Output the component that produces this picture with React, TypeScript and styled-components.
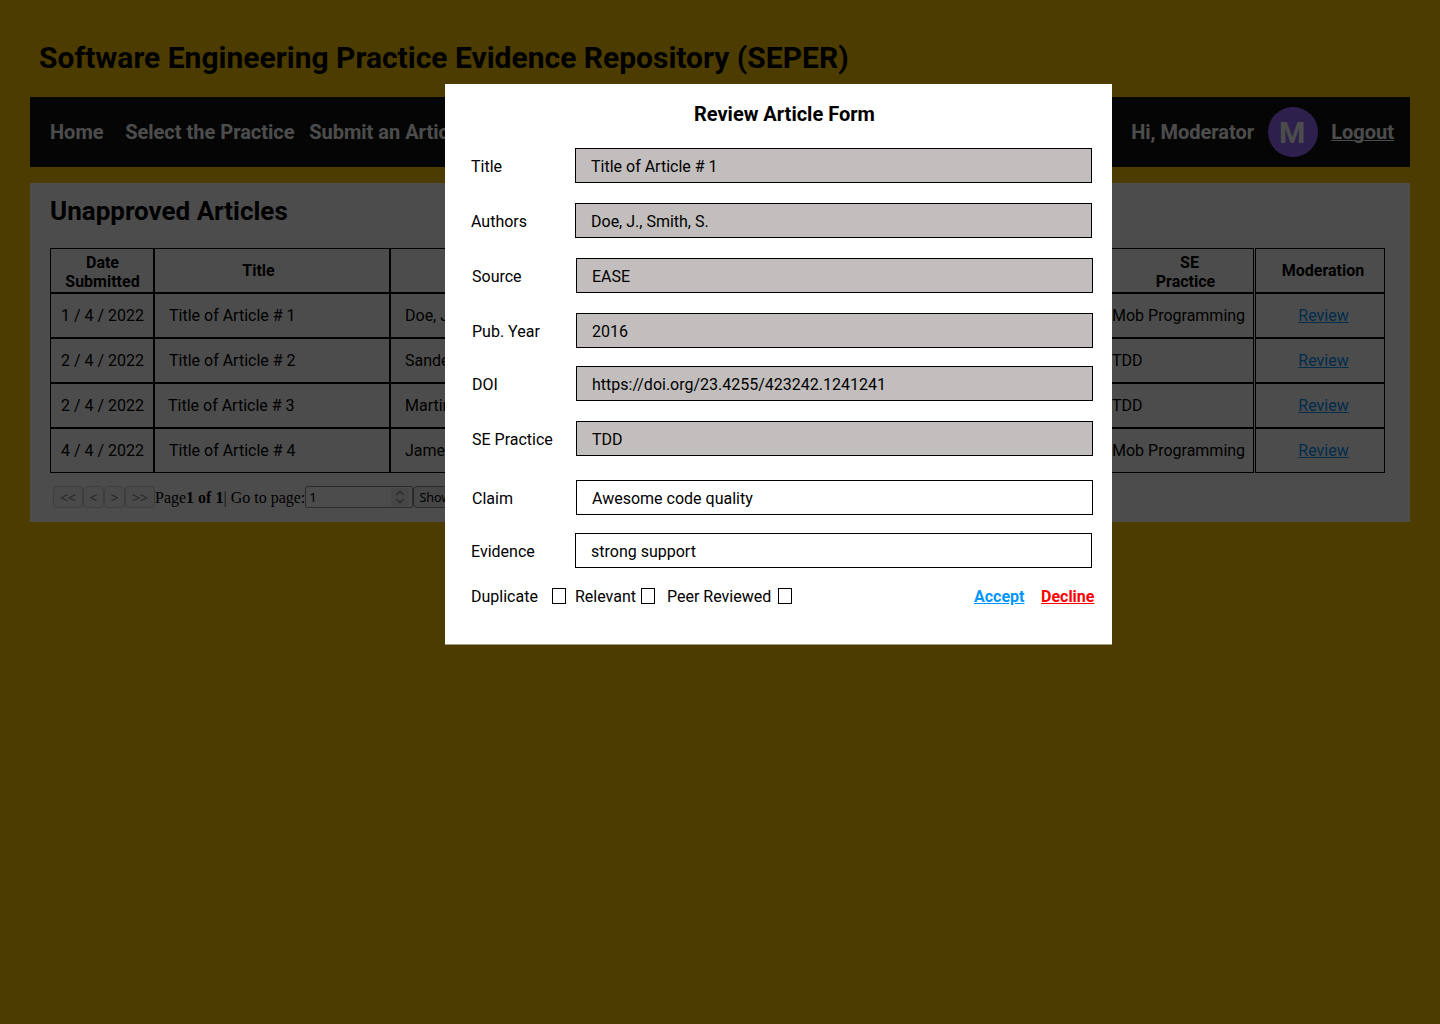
import React from "react";
import styled, { createGlobalStyle } from "styled-components";

const GlobalStyle = createGlobalStyle`
  *, *::before, *::after { box-sizing: border-box; }
  html, body { margin: 0; padding: 0; background: #ffc900; }
  body { font-family: Roboto, "Liberation Sans", sans-serif; font-size: 16px; line-height: 19px; color: #000; overflow: hidden; }
  button, input { font: inherit; color: inherit; }
`;

const Page = styled.div`
  width: 1440px;
  height: 1024px;
  padding: 0 30px;
  background: #ffc900;
  overflow: hidden;
`;

const SiteTitle = styled.h1`
  margin: 0;
  height: 97px;
  padding: 40px 0 0 9px;
  font-size: 30px;
  line-height: 35px;
  font-weight: 700;
`;

const NavBar = styled.nav`
  display: flex;
  align-items: center;
  height: 70px;
  padding: 0 16px 0 20px;
  background: #111;
  color: #fff;
  font-size: 20px;
  line-height: 23px;
  font-weight: 700;
`;

const NavLink = styled.a<{ $gap: number }>`
  margin-right: ${(p) => p.$gap}px;
  white-space: nowrap;
`;

const Greeting = styled.span`
  margin-left: auto;
`;

const Avatar = styled.span`
  display: flex;
  align-items: center;
  justify-content: center;
  width: 50px;
  height: 50px;
  margin: 0 13px 0 14px;
  padding-right: 2px;
  border-radius: 50%;
  background: #9b6bff;
  font-size: 30px;
  line-height: 35px;
`;

const Logout = styled.a`
  text-decoration: underline;
  text-decoration-thickness: 1px;
`;

const Panel = styled.section`
  height: 339px;
  margin-top: 16px;
  padding: 13px 25px 0 20px;
  background: #fff;
`;

const PanelTitle = styled.h2`
  margin: 0 0 22px;
  font-size: 26px;
  line-height: 30px;
  font-weight: 700;
`;

const Table = styled.div`
  display: flex;
  flex-direction: column;
`;

const Row = styled.div<{ $head?: boolean }>`
  display: grid;
  grid-template-columns: 104px 236px 721px 144px 130px;
  height: 45px;
  font-weight: ${(p) => (p.$head ? 700 : 400)};
`;

const Cell = styled.div<{ $align?: string; $pad?: string; $gap?: number }>`
  display: flex;
  align-items: center;
  justify-content: ${(p) => p.$align || "flex-start"};
  padding: ${(p) => p.$pad || "0"};
  margin-right: ${(p) => p.$gap || 0}px;
  border: 1px solid #000;
  text-align: center;
  white-space: pre;
`;

const ReviewLink = styled.a`
  color: #0096ff;
  text-decoration: underline;
`;

const Pager = styled.div`
  display: flex;
  align-items: center;
  height: 22px;
  margin: 13px 0 0 3px;
  font-family: "Liberation Serif", serif;
  white-space: pre;
`;

const PagerButton = styled.button<{ $w: number; $active?: boolean }>`
  width: ${(p) => p.$w}px;
  height: 22px;
  padding: 2px 0 0;
  border: 1px solid ${(p) => (p.$active ? "#8f8f9d" : "#cfcfd3")};
  border-radius: 4px;
  background: ${(p) => (p.$active ? "#e9e9ed" : "#f8f8f8")};
  color: ${(p) => (p.$active ? "#000" : "#858585")};
  font-family: "Noto Sans", "Open Sans", sans-serif;
  font-size: ${(p) => (p.$active ? 12.5 : 14)}px;
  line-height: 18px;
`;

const Divider = styled.span`
  color: #444;
`;

const PageInput = styled.div`
  display: flex;
  align-items: center;
  justify-content: space-between;
  width: 108px;
  height: 22px;
  padding: 0 3px;
  border: 1px solid #8f8f9d;
  border-radius: 2px;
  font-family: "Noto Sans", "Open Sans", sans-serif;
  font-size: 13px;
`;

const Spinner = styled.span`
  display: flex;
  align-items: center;
  justify-content: center;
  width: 18px;
  height: 18px;
  background: #e9e9ed;
`;

const Overlay = styled.div`
  position: absolute;
  top: 0;
  left: 0;
  width: 1440px;
  height: 1024px;
  padding: 84px 0 0 445px;
  background: rgba(0, 0, 0, 0.7);
`;

const Dialog = styled.form`
  width: 667px;
  height: 561px;
  padding: 18px 17px 0 26px;
  border-bottom: 1px solid #a69e80;
  background: #fff;
`;

const DialogTitle = styled.h3`
  margin: 0 0 22px;
  padding-left: 223px;
  font-size: 20px;
  line-height: 24px;
  font-weight: 700;
`;

const Field = styled.label<{ $gap: number; $shift?: number }>`
  display: flex;
  align-items: center;
  height: 35px;
  margin-bottom: ${(p) => p.$gap}px;
  padding-left: ${(p) => p.$shift || 0}px;
`;

const FieldLabel = styled.span`
  flex: 0 0 104px;
  padding-top: 1px;
`;

const FieldBox = styled.span<{ $editable?: boolean }>`
  display: flex;
  align-items: center;
  flex: 0 0 517px;
  height: 35px;
  padding: 1px 15px 0;
  border: 1px solid #000;
  background: ${(p) => (p.$editable ? "#fff" : "#c2bebd")};
`;

const Actions = styled.div`
  display: flex;
  align-items: center;
  height: 19px;
`;

const CheckLabel = styled.span<{ $w: number }>`
  width: ${(p) => p.$w}px;
  white-space: nowrap;
`;

const CheckBox = styled.span<{ $gap: number }>`
  width: 14px;
  height: 16px;
  margin: 0 ${(p) => p.$gap}px 1px 0;
  border: 1px solid #000;
`;

const ActionLink = styled.a<{ $color: string; $w: number }>`
  width: ${(p) => p.$w}px;
  color: ${(p) => p.$color};
  font-weight: 700;
  text-decoration: underline;
`;

const articles = [
  { date: "1 / 4 / 2022", title: "Title of Article # 1", authors: "Doe, J.", practice: "Mob Programming", pad: 14 },
  { date: "2 / 4 / 2022", title: "Title of Article # 2", authors: "Sanders", practice: "TDD", pad: 14 },
  { date: "2 / 4 / 2022", title: "Title of Article # 3", authors: "Martin", practice: "TDD", pad: 13 },
  { date: "4 / 4 / 2022", title: "Title of Article # 4", authors: "James", practice: "Mob Programming", pad: 14 },
];

const fields = [
  { label: "Title", value: "Title of Article # 1", gap: 20, shift: 0 },
  { label: "Authors", value: "Doe, J., Smith, S.", gap: 20, shift: 0 },
  { label: "Source", value: "EASE", gap: 20, shift: 1 },
  { label: "Pub. Year", value: "2016", gap: 18, shift: 1 },
  { label: "DOI", value: "https://doi.org/23.4255/423242.1241241", gap: 20, shift: 1 },
  { label: "SE Practice", value: "TDD", gap: 24, shift: 1 },
  { label: "Claim", value: "Awesome code quality", gap: 18, shift: 1, editable: true },
  { label: "Evidence", value: "strong support", gap: 19, shift: 0, editable: true },
];

export default function App() {
  return (
    <>
      <GlobalStyle />
      <Page>
        <SiteTitle>Software Engineering Practice Evidence Repository (SEPER)</SiteTitle>
        <NavBar>
          <NavLink $gap={21.6}>Home</NavLink>
          <NavLink $gap={14.6}>Select the Practice</NavLink>
          <NavLink $gap={0}>Submit an Article</NavLink>
          <Greeting>Hi, Moderator</Greeting>
          <Avatar>M</Avatar>
          <Logout>Logout</Logout>
        </NavBar>
        <Panel>
          <PanelTitle>Unapproved Articles</PanelTitle>
          <Table>
            <Row $head>
              <Cell $align="center" $pad="3px 0 0 1px">{"Date\nSubmitted"}</Cell>
              <Cell $align="center" $pad="0 27px 0 0">Title</Cell>
              <Cell />
              <Cell $align="center" $pad="3px 0 0 6px" $gap={1}>{"  SE\nPractice"}</Cell>
              <Cell $align="center" $pad="0 0 0 6px">Moderation</Cell>
            </Row>
            {articles.map((a) => (
              <Row key={a.title}>
                <Cell $pad="0 0 0 10px">{a.date}</Cell>
                <Cell $pad={`0 0 0 ${a.pad}px`}>{a.title}</Cell>
                <Cell $pad="0 0 0 14px">{a.authors}</Cell>
                <Cell $pad="0" $gap={1}>{a.practice}</Cell>
                <Cell $align="center" $pad="0 0 0 7px">
                  <ReviewLink>Review</ReviewLink>
                </Cell>
              </Row>
            ))}
          </Table>
          <Pager>
            <PagerButton $w={30} disabled>{"<<"}</PagerButton>
            <PagerButton $w={21} disabled>{"<"}</PagerButton>
            <PagerButton $w={21} disabled>{">"}</PagerButton>
            <PagerButton $w={30} disabled>{">>"}</PagerButton>
            <span>Page</span>
            <b>1 of 1</b>
            <Divider>|</Divider>
            <span> Go to page:</span>
            <PageInput>
              1
              <Spinner>
                <svg width="8" height="14" viewBox="0 0 8 14" fill="none" stroke="#8f8f9d" strokeWidth="1.4">
                  <path d="M0.5 4.8 4 1.3 7.5 4.8M0.5 9.2 4 12.7 7.5 9.2" />
                </svg>
              </Spinner>
            </PageInput>
            <PagerButton $w={44} $active>Show</PagerButton>
          </Pager>
        </Panel>
      </Page>
      <Overlay>
        <Dialog>
          <DialogTitle>Review Article Form</DialogTitle>
          {fields.map((f) => (
            <Field key={f.label} $gap={f.gap} $shift={f.shift}>
              <FieldLabel>{f.label}</FieldLabel>
              <FieldBox $editable={f.editable}>{f.value}</FieldBox>
            </Field>
          ))}
          <Actions>
            <CheckLabel $w={81}>Duplicate</CheckLabel>
            <CheckBox $gap={9} />
            <CheckLabel $w={66}>Relevant</CheckLabel>
            <CheckBox $gap={12} />
            <CheckLabel $w={111}>Peer Reviewed</CheckLabel>
            <CheckBox $gap={182} />
            <ActionLink $color="#0096ff" $w={67}>Accept</ActionLink>
            <ActionLink $color="#ff0000" $w={54}>Decline</ActionLink>
          </Actions>
        </Dialog>
      </Overlay>
    </>
  );
}
